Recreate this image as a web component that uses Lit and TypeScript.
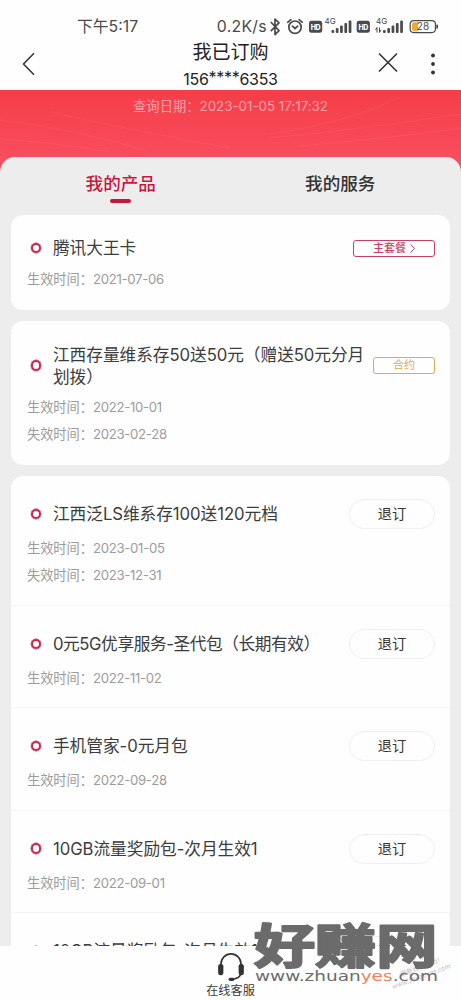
import { LitElement, html, svg, css, nothing } from "lit";
import { customElement, property } from "lit/decorators.js";

interface Product {
  title: string;
  start: string;
  end?: string;
}

const PRODUCTS: Product[] = [
  { title: "江西泛LS维系存100送120元档", start: "2023-01-05", end: "2023-12-31" },
  { title: "0元5G优享服务-圣代包（长期有效）", start: "2022-11-02" },
  { title: "手机管家-0元月包", start: "2022-09-28" },
  { title: "10GB流量奖励包-次月生效1", start: "2022-09-01" },
  { title: "10GB流量奖励包-次月生效1", start: "2022-08-01" },
];

@customElement("status-bar")
class StatusBar extends LitElement {
  static styles = css`
    :host {
      display: flex;
      align-items: center;
      height: 28px;
      padding: 13px 22px 0 77px;
      color: #4a4a4a;
      font-size: 15.8px;
      line-height: 28px;
    }
    .time { flex: 1; }
    .speed { letter-spacing: 0.3px; margin-right: 2px; }
    svg { display: block; flex: none; }
  `;
  signal(x: number, data: boolean) {
    return svg`
      <text x=${x - 0.5} y="11" font-size="8" fill="#4a4a4a">4G</text>
      ${[3, 5, 7.5, 10, 12.5].map(
        (h, i) => svg`<rect x=${x + 6.5 + i * 4.3} y=${20 - h} width="2.7" height=${h} rx="1" />`
      )}
      ${data ? svg`<path d="M${x - 1} 17l1.500-2.500v5M${x + 3} 14.500v5l1.500-2.500" fill="none" stroke="#4a4a4a" stroke-width="1" />` : nothing}`;
  }
  render() {
    return html`
      <span class="time">下午5:17</span>
      <span class="speed">0.2K/s</span>
      <svg width="170" height="28" viewBox="0 0 170 28" fill="#4a4a4a">
        <path d="M1.800 9l8.200 8.600-4 4V6l4 3.800L1.800 18.200" fill="none" stroke="#4a4a4a" stroke-width="1.700" stroke-linejoin="round" />
        <g fill="none" stroke="#4a4a4a" stroke-width="1.700" stroke-linecap="round">
          <circle cx="26" cy="14.200" r="6.200" />
          <path d="M18.700 9.300l3.200-2.700M33.300 9.300l-3.200-2.700M23.400 13.200l2.600 2.300 2.700-2.300" />
        </g>
        <rect x="40" y="7.800" width="13.200" height="12" rx="2.400" />
        <text x="41.700" y="16.500" font-size="7" font-weight="800" fill="#fff" textLength="9.800">HD</text>
        ${this.signal(56, false)}
        <rect x="87.700" y="7.800" width="13.200" height="12" rx="2.400" />
        <text x="89.400" y="16.500" font-size="7" font-weight="800" fill="#fff" textLength="9.800">HD</text>
        ${this.signal(107.5, true)}
        <rect x="141.200" y="7.600" width="25.200" height="12" rx="3.500" fill="#fff" stroke="#4a4a4a" stroke-width="1.200" />
        <path d="M145 9.300h4v8.600h-4q-2 0-2-2v-4.600q0-2 2-2z" fill="#f6a62c" />
        <rect x="167.300" y="11.500" width="1.700" height="4.200" rx=".8" />
        <text x="147.800" y="17.300" font-size="10" textLength="12.500">28</text>
      </svg>
    `;
  }
}

@customElement("product-item")
class ProductItem extends LitElement {
  @property() title = "";
  @property() start = "";
  @property() end = "";
  @property({ type: Boolean, reflect: true }) tight = false;
  static styles = css`
    :host { display: block; padding: 23px 15px 16.2px 16px; }
    :host([tight]) { padding-top: 18px; }
    .head {
      display: flex;
      align-items: center;
      min-height: 30px;
      margin-bottom: 6px;
    }
    :host([tight]) .head { margin-bottom: 3px; }
    .dot {
      flex: none;
      width: 6.4px;
      height: 6.4px;
      margin: 0 12px 0 3.6px;
      border: 2.6px solid #c9294c;
      border-width: 2.6px;
      border-radius: 50%;
      box-shadow: 0 0 0 0.4px #c9294c;
    }
    .title {
      flex: 1;
      color: #3c3c3c;
      font-size: 16.7px;
      line-height: 22px;
      letter-spacing: -0.05px;
    }
    .long { letter-spacing: -0.42px; }
    .date {
      display: flex;
      height: 27.5px;
      line-height: 27.5px;
      color: #9c9c9c;
      font-size: 13.2px;
    }
    .value { letter-spacing: -0.3px; }
  `;
  line(label: string, value: string) {
    return html`<div class="date"><span>${label}：</span><span class="value">${value}</span></div>`;
  }
  render() {
    return html`
      <div class="head">
        <i class="dot"></i>
        <span class="title ${this.title.endsWith("有效）") ? "long" : ""}">${this.title}</span>
        <slot></slot>
      </div>
      ${this.line("生效时间", this.start)}
      ${this.end ? this.line("失效时间", this.end) : nothing}
    `;
  }
}

@customElement("site-mark")
class SiteMark extends LitElement {
  static styles = css`
    :host { display: block; }
    svg { display: block; overflow: visible; }
    .name {
      font: 700 47px "Noto Sans CJK SC", sans-serif;
      fill: #6b6b6b;
      stroke: #6b6b6b;
      stroke-width: 2.2;
      stroke-linejoin: round;
    }
    .url { font: 14.5px "DejaVu Sans", sans-serif; fill: #6b6b6b; }
    .hot { fill: #f47e5c; }
    .faint { font: 6.5px "Noto Sans CJK SC", sans-serif; fill: #bdbdbd; }
  `;
  render() {
    return html`
      <svg width="206" height="80" viewBox="0 0 206 80">
        <g class="faint" transform="rotate(-20 138 69)">
          <text x="150" y="60">最新线报活动！</text>
          <text x="138" y="69" textLength="62">www.zhuanyes.com</text>
        </g>
        <text class="name" transform="translate(-1 43) scale(1.3 1)" x="0" y="0">好赚网</text>
        <text class="url" x="0" y="61" textLength="183" lengthAdjust="spacingAndGlyphs">www.zhuan<tspan class="hot">yes</tspan>.com</text>
      </svg>
    `;
  }
}

@customElement("app-root")
class AppRoot extends LitElement {
  static styles = css`
    :host {
      position: relative;
      display: flex;
      flex-direction: column;
      height: 1000px;
      overflow: hidden;
      background: #fefefe;
      font-family: Inter, "Noto Sans CJK SC", sans-serif;
    }
    .nav {
      display: grid;
      grid-template-columns: 1fr auto 1fr;
      align-items: center;
      height: 49px;
      flex: none;
      padding: 0 20px;
    }
    .heading { text-align: center; color: #222; }
    .name { font-size: 19px; line-height: 24px; }
    .phone { font-size: 16px; line-height: 24px; letter-spacing: -0.3px; }
    .stars { vertical-align: 1.5px; }
    .back { margin-bottom: 4px; }
    .actions { display: flex; justify-content: flex-end; padding-bottom: 3px; }
    .scroll {
      flex: 1;
      min-height: 0;
      overflow: hidden;
      background: linear-gradient(#f43e48, #f94d5d 68px);
      display: flex;
      flex-direction: column;
    }
    .banner {
      display: grid;
      flex: none;
      height: 67px;
    }
    .banner > * { grid-area: 1 / 1; }
    .query {
      padding-top: 6px;
      text-align: center;
      font-size: 13.3px;
      line-height: 20px;
      letter-spacing: 0.02px;
      color: #fba3a9;
    }
    .sheet {
      flex: 1;
      padding: 0 11px;
      border-radius: 15px 15px 0 0;
      background: #ededed;
    }
    .tabs {
      display: grid;
      grid-template-columns: 1fr 1fr;
      height: 58px;
    }
    .tab {
      display: flex;
      flex-direction: column;
      align-items: center;
      padding-top: 15px;
      font-size: 17.6px;
      line-height: 24px;
      font-weight: 500;
      color: #333;
    }
    .active { color: #c8173d; }
    .active::after {
      content: "";
      width: 21px;
      height: 4px;
      margin-top: 2.5px;
      border-radius: 2px;
      background: #c8173d;
    }
    .card {
      display: block;
      margin-bottom: 11px;
      border-radius: 12px;
      background: #fefefe;
    }
    .row + .row { border-top: 1px solid #f5f5f5; margin-top: -1.3px; }
    .tag {
      display: flex;
      align-items: center;
      justify-content: center;
      gap: 4px;
      box-sizing: border-box;
      height: 17px;
      border: 1px solid;
      border-radius: 3px;
      font-size: 11px;
      line-height: 15px;
    }
    .main { width: 82px; color: #c73f61; font-weight: 500; }
    .contract { width: 62px; color: #dfab50; }
    .cancel {
      box-sizing: border-box;
      width: 86px;
      height: 30px;
      border: 1px solid #efefef;
      border-radius: 15px;
      text-align: center;
      font-size: 14.2px;
      line-height: 27px;
      color: #333;
    }
    .footer {
      display: flex;
      flex-direction: column;
      align-items: center;
      flex: none;
      box-sizing: border-box;
      height: 54.5px;
      padding-top: 6px;
      font-size: 12.2px;
      line-height: 18px;
      color: #3c3c3c;
    }
    .mark { position: absolute; left: 255px; top: 920px; }
    svg { display: block; }
  `;
  render() {
    return html`
      <status-bar></status-bar>
      <div class="nav">
        <svg class="back" width="18" height="24" viewBox="0 0 18 24" fill="none" stroke="#333" stroke-width="1.500">
          <path d="M14 1.300L3.500 12 14 22.700" />
        </svg>
        <div class="heading">
          <div class="name">我已订购</div>
          <div class="phone">156<span class="stars">****</span>6353</div>
        </div>
        <div class="actions">
          <svg width="64" height="24" viewBox="0 0 64 24" fill="#333">
            <path d="M2 1.500l18 18M20 1.500l-18 18" stroke="#333" stroke-width="1.600" />
            <circle cx="56" cy="3.500" r="1.900" /><circle cx="56" cy="12" r="1.900" /><circle cx="56" cy="20.500" r="1.900" />
          </svg>
        </div>
      </div>
      <div class="scroll">
        <div class="banner">
          <svg width="461" height="67" viewBox="0 0 461 67" fill="none" stroke="#ff7380" stroke-opacity=".22">
            <path d="M0 30Q70 38 145 60M0 49Q50 52 110 62M50 22Q130 40 230 58M270 44Q350 32 400 7M270 48Q370 38 461 24M300 56Q390 48 461 38" />
          </svg>
          <div class="query">查询日期：2023-01-05 17:17:32</div>
        </div>
        <div class="sheet">
          <div class="tabs">
            <div class="tab active">我的产品</div>
            <div class="tab">我的服务</div>
          </div>
          <product-item class="card" tight title="腾讯大王卡" start="2021-07-06">
            <div class="tag main">主套餐
              <svg width="5" height="9" viewBox="0 0 5 9" fill="none" stroke="currentColor"><path d="M.5.500l4 4-4 4" /></svg>
            </div>
          </product-item>
          <product-item class="card" title="江西存量维系存50送50元（赠送50元分月划拨）" start="2022-10-01" end="2023-02-28">
            <div class="tag contract">合约</div>
          </product-item>
          <div class="card">
            ${PRODUCTS.map(
              (p) => html`<product-item class="row" .title=${p.title} .start=${p.start} .end=${p.end ?? ""}>
                <div class="cancel">退订</div>
              </product-item>`
            )}
          </div>
        </div>
      </div>
      <div class="footer">
        <svg width="30" height="32" viewBox="0 0 30 32" fill="#333">
          <path d="M4.500 14V12.500a10.500 10.500 0 0 1 21 0V14M25.500 22q-1 6-9 6.500" fill="none" stroke="#333" stroke-width="1.700" />
          <rect x="1.500" y="12.500" width="5.500" height="12" rx="2.500" />
          <rect x="23" y="12.500" width="5.500" height="12" rx="2.500" />
          <rect x="12.500" y="27" width="6" height="3.400" rx="1.700" />
        </svg>
        <span>在线客服</span>
      </div>
      <site-mark class="mark"></site-mark>
    `;
  }
}
